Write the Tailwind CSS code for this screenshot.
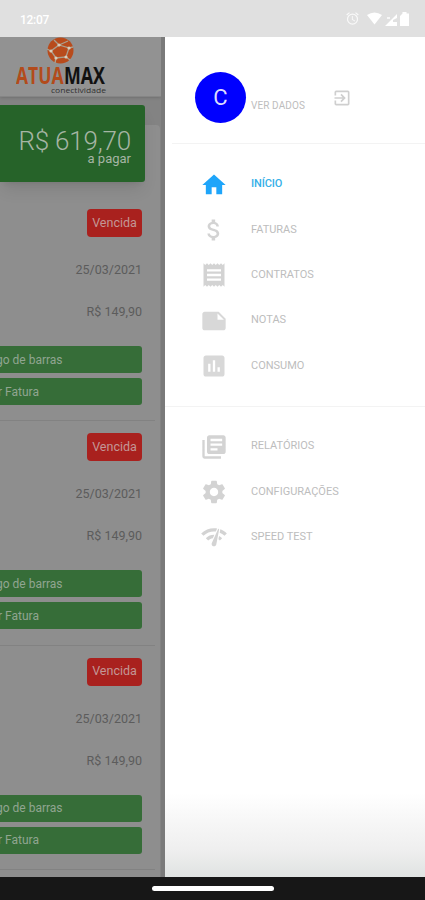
<!DOCTYPE html>
<html lang="pt-BR">
<head>
    <meta charset="UTF-8">
    <meta name="viewport" content="width=device-width, initial-scale=1.0">
    <script src="https://cdn.jsdelivr.net/npm/@tailwindcss/browser@4"></script>
    <title>Atuamax</title>
</head>

<body class="font-['Roboto',sans-serif]">
    <!--Container-->
    <div class="flex flex-col h-[900px] w-[425px] overflow-hidden bg-white">
        <!--Status bar-->
        <div class="flex shrink-0 items-center justify-between h-[37px] bg-[#e0e0e0] pl-[20px] pr-[16px] text-white">
            <span class="text-[12px] tracking-[-0.3px] font-medium mt-[2px]">12:07</span>
            <div class="flex items-center">
                <svg class="w-[15px] h-[15px] mr-[7px] opacity-80" viewBox="0 0 24 24" fill="currentColor"><path d="M22 5.72l-4.6-3.86-1.29 1.53 4.6 3.86L22 5.72zM7.88 3.39L6.6 1.86 2 5.71l1.29 1.53 4.59-3.85zM12.5 8H11v6l4.75 2.85.75-1.23-4-2.37V8zM12 4a9 9 0 1 0 0 18 9 9 0 0 0 0-18zm0 16a7 7 0 1 1 0-14 7 7 0 0 1 0 14z"/></svg>
                <svg class="w-[15px] h-[13px] mr-[3px]" viewBox="0 0 15 13" fill="currentColor"><path d="M0 3Q7.500-2 15 3L7.500 12.500z"/></svg>
                <svg class="w-[12px] h-[14px] mr-[3px]" viewBox="0 0 12 14" fill="currentColor"><path d="M0 14L12 2v4L8 8v2h4v4z"/><path d="M2 5h3v2H2z" opacity=".7"/></svg>
                <svg class="w-[9px] h-[14px]" viewBox="0 0 9 14" fill="currentColor"><path d="M2.500 1.500V0h4v1.500H9V14H0V4z"/></svg>
            </div>
        </div><!--/Status bar-->

        <!--Main-->
        <div class="flex h-[840px] shrink-0">
            <!--Faturas-->
            <div class="w-[165px] shrink-0 h-full overflow-hidden bg-[#838383] border-r-4 border-[#7a7a7a]">
                <!--Logo-->
                <div class="h-[60px] bg-[#929292] border-b border-[#858585] shadow-sm pl-[16px]">
                    <svg class="w-[92px] h-[60px]" viewBox="0 0 92 60">
                        <circle cx="44.500" cy="13.500" r="13" fill="#b84b1c"/>
                        <g stroke="#aaa08f" stroke-width="1.300" fill="none">
                            <path d="M38 3l5 5 9-4M43 8l-8 6 5 7 10-1 3-9-10-3M35 14l-4-2M40 21l-1 5M50 20l4 3M53 11l4-1"/>
                        </g>
                        <g fill="#d8cdbb">
                            <circle cx="43" cy="8" r="1.600"/><circle cx="35" cy="14" r="1.600"/><circle cx="40" cy="21" r="1.600"/><circle cx="50" cy="20" r="1.600"/><circle cx="53" cy="11" r="1.600"/>
                        </g>
                        <text x="0" y="47" font-family="Open Sans, sans-serif" font-weight="700" font-size="24" fill="#b34b1b" textLength="47.500" lengthAdjust="spacingAndGlyphs">ATUA</text>
                        <text x="48" y="47" font-family="Open Sans, sans-serif" font-weight="700" font-size="24" fill="#111" textLength="41" lengthAdjust="spacingAndGlyphs">MAX</text>
                        <text x="35" y="56" font-family="Open Sans, sans-serif" font-weight="400" font-size="8" fill="#333" textLength="55" lengthAdjust="spacingAndGlyphs">conectividade</text>
                    </svg>
                </div><!--/Logo-->

                <!--Total a pagar-->
                <div class="relative z-10 mt-[8px] w-[145px] h-[77px] rounded-r-[3px] bg-[#266329] shadow-lg pr-[14px] pt-[24px] text-right text-[#a5b5a4]">
                    <p class="text-[26px] leading-[24px] font-light whitespace-nowrap tracking-[-0.2px]">R$ 619,70</p>
                    <p class="text-[13px] leading-[12px]">a pagar</p>
                </div>

                <!--Lista-->
                <div class="-mt-[57px] w-[160px] h-[760px] rounded-tr-[4px] bg-[#8e8e8e] pt-[72px]">
                    <div id="faturas"></div>
                </div>
            </div><!--/Faturas-->

            <!--Menu-->
            <div class="flex-1 h-full bg-linear-to-b from-white from-90% via-[#eeeeee] via-97% to-[#e0e3e2]">
                <!--Usuario-->
                <div class="flex h-[107px] ml-[7px] border-b border-[#f3f3f3] pl-[23px] pt-[35px]">
                    <div class="flex items-center justify-center size-[51px] rounded-full bg-[#0000ff] text-[22px] text-[#dcdcff]">C</div>
                    <p class="ml-[5px] mt-[27px] w-[56px] text-[10px] leading-[14px] text-[#bdbdbd] whitespace-nowrap tracking-[0.1px]">VER DADOS</p>
                    <svg class="w-[20px] h-[20px] ml-[25px] mt-[16px]" viewBox="0 0 24 24" fill="#cfcfcf"><path d="M10.090 15.590L11.500 17l5-5-5-5-1.410 1.410L12.670 11H3v2h9.670l-2.580 2.590zM19 3H5a2 2 0 0 0-2 2v4h2V5h14v14H5v-4H3v4a2 2 0 0 0 2 2h14a2 2 0 0 0 2-2V5a2 2 0 0 0-2-2z"/></svg>
                </div><!--/Usuario-->

                <!--Opciones-->
                <div class="grid auto-rows-[45.300px] h-[263px] pt-[18px] border-b border-[#f3f3f3] text-[11px] text-[#bdbdbd]">
                    <div class="flex items-center pl-[35px] text-[#35b0e8] font-medium">
                        <svg class="size-[28px] mr-[23px]" viewBox="0 0 24 24" fill="#1ea5fa"><path d="M10 20v-6h4v6h5v-8h3L12 3 2 12h3v8z"/></svg>
                        <span class="tracking-[-0.1px]">INÍCIO</span>
                    </div>
                    <div class="flex items-center pl-[35px]">
                        <svg class="size-[28px] mr-[23px]" viewBox="0 0 24 24" fill="#d3d3d3"><path d="M11.800 10.900c-2.270-.59-3-1.200-3-2.150 0-1.090 1.010-1.850 2.700-1.850 1.780 0 2.440.85 2.500 2.100h2.210c-.07-1.720-1.120-3.300-3.210-3.810V3h-3v2.160c-1.940.42-3.500 1.680-3.500 3.610 0 2.310 1.910 3.460 4.700 4.130 2.500.6 3 1.480 3 2.410 0 .69-.49 1.790-2.700 1.790-2.060 0-2.870-.92-2.980-2.100h-2.200c.12 2.190 1.760 3.420 3.680 3.830V21h3v-2.150c1.950-.37 3.500-1.500 3.500-3.550 0-2.840-2.430-3.810-4.700-4.400z"/></svg>
                        <span>FATURAS</span>
                    </div>
                    <div class="flex items-center pl-[35px]">
                        <svg class="size-[28px] mr-[23px]" viewBox="0 0 24 24" fill="#d3d3d3"><path d="M18 17H6v-2h12v2zm0-4H6v-2h12v2zm0-4H6V7h12v2zM3 22l1.500-1.500L6 22l1.500-1.500L9 22l1.500-1.500L12 22l1.500-1.500L15 22l1.500-1.500L18 22l1.500-1.500L21 22V2l-1.500 1.500L18 2l-1.500 1.500L15 2l-1.500 1.500L12 2l-1.500 1.500L9 2 7.500 3.500 6 2 4.500 3.500 3 2v20z"/></svg>
                        <span>CONTRATOS</span>
                    </div>
                    <div class="flex items-center pl-[35px]">
                        <svg class="size-[28px] mr-[23px]" viewBox="0 0 24 24" fill="#d8d8d8"><path d="M22 10l-6-6H4c-1.100 0-2 .9-2 2v12.010c0 1.100.9 1.990 2 1.990h16c1.100 0 2-.9 2-2v-8zm-7-4.500l5.500 5.500H15V5.500z"/></svg>
                        <span>NOTAS</span>
                    </div>
                    <div class="flex items-center pl-[35px]">
                        <svg class="size-[28px] mr-[23px]" viewBox="0 0 24 24" fill="#d8d8d8"><path d="M19 3H5c-1.100 0-2 .9-2 2v14c0 1.100.9 2 2 2h14c1.100 0 2-.9 2-2V5c0-1.100-.9-2-2-2zM9 17H7v-7h2v7zm4 0h-2V7h2v10zm4 0h-2v-4h2v4z"/></svg>
                        <span>CONSUMO</span>
                    </div>
                </div>

                <div class="grid auto-rows-[45.300px] pt-[17px] text-[11px] text-[#bdbdbd]">
                    <div class="flex items-center pl-[35px]">
                        <svg class="size-[28px] mr-[23px]" viewBox="0 0 24 24" fill="#d3d3d3"><path d="M4 6H2v14c0 1.100.9 2 2 2h14v-2H4V6zm16-4H8c-1.100 0-2 .9-2 2v12c0 1.100.9 2 2 2h12c1.100 0 2-.9 2-2V4c0-1.100-.9-2-2-2zm-1 9H9V9h10v2zm-4 4H9v-2h6v2zm4-8H9V5h10v2z"/></svg>
                        <span>RELATÓRIOS</span>
                    </div>
                    <div class="flex items-center pl-[35px]">
                        <svg class="size-[28px] mr-[23px]" viewBox="0 0 24 24" fill="#d3d3d3"><path d="M19.140 12.940c.04-.3.060-.61.060-.94 0-.32-.02-.64-.07-.94l2.030-1.580c.18-.14.230-.41.120-.61l-1.920-3.320c-.12-.22-.37-.29-.59-.22l-2.390.96c-.5-.38-1.030-.7-1.620-.94l-.36-2.540c-.04-.24-.24-.41-.48-.41h-3.840c-.24 0-.43.170-.47.410l-.36 2.540c-.59.240-1.130.570-1.620.940l-2.390-.96c-.22-.08-.47 0-.59.220L2.740 8.870c-.12.210-.08.470.120.610l2.030 1.580c-.05.300-.09.630-.09.940s.02.640.070.940l-2.030 1.580c-.18.140-.23.410-.12.610l1.920 3.320c.12.220.370.290.590.220l2.390-.96c.5.380 1.030.700 1.620.940l.36 2.540c.05.240.240.410.480.410h3.840c.24 0 .44-.17.470-.41l.36-2.540c.59-.24 1.130-.56 1.620-.94l2.390.96c.22.080.470 0 .59-.22l1.920-3.320c.12-.22.070-.47-.12-.61l-2.010-1.580zM12 15.600c-1.980 0-3.600-1.620-3.600-3.600s1.620-3.600 3.600-3.600 3.600 1.620 3.600 3.600-1.620 3.600-3.600 3.600z"/></svg>
                        <span>CONFIGURAÇÕES</span>
                    </div>
                    <div class="flex items-center pl-[35px]">
                        <svg class="size-[28px] mr-[23px]" viewBox="0 0 24 24" fill="#d3d3d3"><path d="M15.900 5c-.17 0-.32.090-.41.230l-.07.150-5.180 11.650c-.16.290-.26.610-.26.960 0 1.110.9 2.010 2.010 2.010.96 0 1.770-.68 1.960-1.590l.01-.03L16.400 5.500c0-.28-.22-.5-.5-.5zM1 9l2 2c2.880-2.880 6.790-4.080 10.530-3.620l1.190-2.680C9.890 3.840 4.740 5.270 1 9zm20 2l2-2c-1.640-1.640-3.550-2.820-5.590-3.570l-.53 2.820c1.500.62 2.900 1.530 4.120 2.750zm-4 4l2-2c-.8-.8-1.700-1.420-2.660-1.890l-.55 2.920c.42.270.830.590 1.210.970zM5 13l2 2c1.130-1.130 2.560-1.790 4.030-2l1.280-2.880c-2.630-.08-5.300.870-7.310 2.880z"/></svg>
                        <span>SPEED TEST</span>
                    </div>
                </div><!--/Opciones-->
            </div><!--/Menu-->
        </div><!--/Main-->

        <!--Barra inferior-->
        <div class="flex flex-1 justify-center bg-[#171717] pt-[9px]">
            <div class="w-[122px] h-[5px] rounded-full bg-white"></div>
        </div>
    </div><!--/Container-->

    <script>
        // Datos de las facturas
        let faturas = [
            { estado: "Vencida", fecha: "25/03/2021", valor: "R$ 149,90" },
            { estado: "Vencida", fecha: "25/03/2021", valor: "R$ 149,90" },
            { estado: "Vencida", fecha: "25/03/2021", valor: "R$ 149,90" }
        ];

        let faturasDiv = document.getElementById("faturas");

        // Mostrar las facturas
        for (let f of faturas) {
            let item = document.createElement("div");
            item.className = "flex flex-col items-end w-[155px] h-[224.400px] pt-[12px] pr-[13px] border-b border-[#828282] text-[12.500px]";
            item.innerHTML =
                '<span class="flex items-center justify-center w-[55px] h-[28px] rounded-[4px] bg-[#a9211e] text-[#c39796]">' + f.estado + '</span>' +
                '<span class="mt-[23px] h-[20px] leading-[20px] text-[#5c5c5c]">' + f.fecha + '</span>' +
                '<span class="mt-[22px] h-[20px] leading-[20px] text-[#5c5c5c]">' + f.valor + '</span>' +
                '<div class="flex items-center mt-[24px] w-[142px] h-[27px] rounded-r-[3px] bg-[#366d38] text-[#91a591] whitespace-nowrap"><span class="-ml-[4px] text-[12px]">go de barras</span></div>' +
                '<div class="flex items-center mt-[5px] w-[142px] h-[27px] rounded-r-[3px] bg-[#366d38] text-[#91a591] whitespace-nowrap"><span class="-ml-[2px] text-[12px]">r Fatura</span></div>';
            faturasDiv.appendChild(item);
        }
    </script>
</body>
</html>
